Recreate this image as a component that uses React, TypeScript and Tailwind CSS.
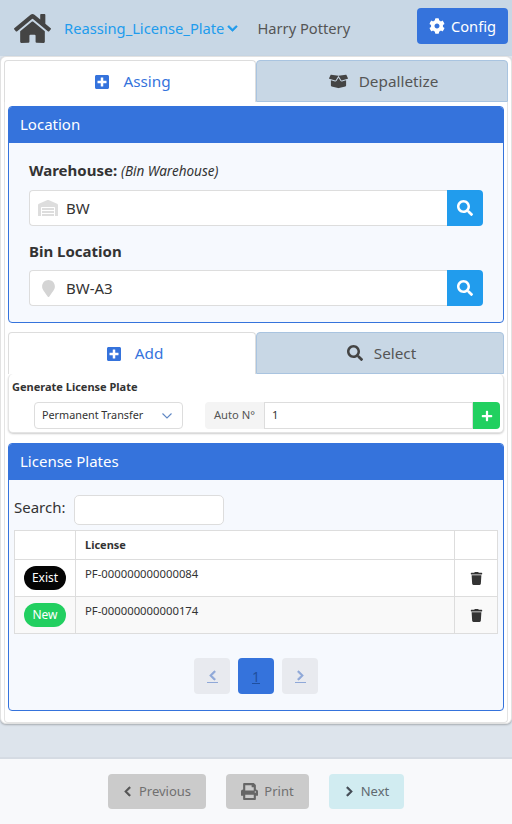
import React from "react";
import { FaHome, FaCog, FaPlusSquare, FaBoxOpen, FaSearch, FaWarehouse, FaMapMarker, FaTrash, FaChevronDown, FaChevronLeft, FaChevronRight, FaPrint, FaPlus } from "react-icons/fa";

function Tabs({ a, b, aIcon, bIcon }: { a: string; b: string; aIcon: React.ReactNode; bIcon: React.ReactNode }) {
  return (
    <div className="flex h-[42px] text-[15.3px]">
      <div className="w-1/2 flex items-center justify-center gap-[13px] pl-[5px] bg-white border border-b-0 border-[#dddddd] rounded-t-[4px] text-[#3573dc]">
        {aIcon}
        <span>{a}</span>
      </div>
      <div className="w-1/2 flex items-center justify-center gap-[11px] pl-[3px] bg-[#c8d7e5] border border-[#a9c4e0] rounded-t-[4px] text-[#555555]">
        {bIcon}
        <span>{b}</span>
      </div>
    </div>
  );
}

function CardHeader({ title }: { title: string }) {
  return <div className="h-[36px] bg-[#3573dc] text-white text-[15px] flex items-center px-[11px] pb-[2px] rounded-t-[3px]">{title}</div>;
}

function SearchInput({ icon, value }: { icon: React.ReactNode; value: string }) {
  return (
    <div className="flex h-[36px] mt-[8px]">
      <div className="flex-1 flex items-center bg-white border border-[#dddddd] border-r-0 rounded-l-[4px] text-[15px] text-[#333333]">
        <div className="w-[36px] flex justify-center">{icon}</div>
        <span>{value}</span>
      </div>
      <div className="w-[36px] bg-[#219ced] rounded-r-[4px] flex items-center justify-center text-white">
        <FaSearch size={16} />
      </div>
    </div>
  );
}

function Row({ badge, color, license, shade, h }: { badge: string; color: string; license: string; shade?: boolean; h: string }) {
  return (
    <div className={`flex border-t border-[#dddddd] ${h} ${shade ? "bg-[#f9f9f9]" : "bg-white"}`}>
      <div className="w-[61px] flex items-center justify-center border-r border-[#dddddd]">
        <span className={`w-[42px] h-[24px] rounded-full text-white text-[12px] flex items-center justify-center ${color}`}>{badge}</span>
      </div>
      <div className="flex-1 pl-[9px] pt-[6px] text-[11.3px] text-[#333333] border-r border-[#dddddd]">{license}</div>
      <div className="w-[42px] flex items-center justify-center text-[#333333]">
        <FaTrash size={13} />
      </div>
    </div>
  );
}

function PageArrow({ children }: { children: React.ReactNode }) {
  return (
    <div className="w-[36px] h-[36px] bg-[#e8eaef] rounded-[4px] flex items-center justify-center">
      <span className="border-b border-[#8fa8d8] text-[#8fa8d8] pb-[1px]">{children}</span>
    </div>
  );
}

export default function App() {
  return (
    <div className="w-[512px] h-[824px] flex flex-col bg-[#dde4ec] overflow-hidden font-['Noto_Sans','Open_Sans',sans-serif] text-[#333333]">
      <header className="h-[56px] bg-[#c8d7e5] flex items-center pl-[14px] pr-[4px] shrink-0">
        <FaHome size={37} className="text-[#444444]" />
        <span className="ml-[13px] text-[14.7px] text-[#219ced]">Reassing_License_Plate</span>
        <FaChevronDown size={11} stroke="currentColor" strokeWidth={30} className="ml-[3px] text-[#219ced]" />
        <span className="ml-[19px] text-[14.7px] text-[#555555]">Harry Pottery</span>
        <button className="ml-auto mb-[4px] w-[91px] h-[36px] bg-[#3573dc] rounded-[4px] text-white text-[14.7px] flex items-center justify-center gap-[6px]">
          <FaCog size={16} />
          Config
        </button>
      </header>

      <main className="h-[668px] shrink-0 bg-white rounded-[6px] border border-[#e2e2e2] shadow-[0_1px_2px_rgba(0,0,0,0.25)] px-[3px] pt-[3px]">
        <Tabs a="Assing" b="Depalletize" aIcon={<FaPlusSquare size={16} />} bIcon={<FaBoxOpen size={19} className="text-[#444444]" />} />
        <div className="border border-[#e4e4e4] border-t-0 rounded-b-[4px] px-[3px] pt-[4px] pb-[8px] h-[621px]">
          <section className="h-[217px] border border-[#3573dc] rounded-[4px] bg-[#f6f9fe]">
            <CardHeader title="Location" />
            <div className="px-[20px] pt-[16px]">
              <div className="text-[15px] leading-[22px] h-[23px]">
                <b>Warehouse:</b> <i className="text-[13.5px]">(Bin Warehouse)</i>
              </div>
              <SearchInput icon={<FaWarehouse size={20} className="text-[#dddddd]" />} value="BW" />
              <div className="text-[15px] font-bold leading-[22px] h-[22px] mt-[14px]">Bin Location</div>
              <SearchInput icon={<FaMapMarker size={17} className="text-[#d4d4d4]" />} value="BW-A3" />
            </div>
          </section>

          <div className="mt-[9px]">
            <Tabs a="Add" b="Select" aIcon={<FaPlusSquare size={16} />} bIcon={<FaSearch size={16} className="text-[#444444]" />} />
          </div>
          <div className="h-[59px] bg-white border border-[#e4e4e4] border-t-0 rounded-[5px] shadow-[0_1px_2px_rgba(0,0,0,0.2)] px-[3px] pt-[4px]">
            <div className="text-[11px] font-bold leading-[18px]">Generate License Plate</div>
            <div className="flex h-[27px] mt-[6px] text-[11.2px]">
              <div className="ml-[22px] w-[149px] bg-white border border-[#dddddd] rounded-[4px] flex items-center justify-between pl-[7px] pr-[10px] text-[10.8px]">
                <span>Permanent Transfer</span>
                <svg width="10" height="6" viewBox="0 0 10 6" fill="none" stroke="#5f87c4" strokeWidth="1.1"><path d="M0.5 0.5 L5 5 L9.5 0.5" /></svg>
              </div>
              <div className="ml-[22px] w-[59px] bg-[#f4f4f4] rounded-l-[4px] flex items-center justify-center text-[#555555]">Auto N°</div>
              <div className="w-[209px] bg-white border border-[#dddddd] flex items-center pl-[7px]">1</div>
              <div className="w-[27px] bg-[#22d060] rounded-r-[4px] flex items-center justify-center text-white">
                <FaPlus size={12} />
              </div>
            </div>
          </div>

          <section className="mt-[10px] h-[268px] border border-[#3573dc] rounded-[4px] bg-[#f6f9fe]">
            <CardHeader title="License Plates" />
            <div className="px-[5px] pt-[15px]">
              <div className="flex items-center h-[30px] text-[15px]">
                <span className="pb-[5px]">Search:</span>
                <div className="ml-[8px] w-[150px] h-[30px] bg-white border border-[#dddddd] rounded-[5px]" />
              </div>
              <div className="mt-[5px] h-[104px] border border-[#dddddd] flex flex-col">
                <div className="flex h-[28px] bg-white">
                  <div className="w-[61px] border-r border-[#dddddd]" />
                  <div className="flex-1 pl-[9px] pt-[1px] flex items-center text-[11px] font-bold border-r border-[#dddddd]">License</div>
                  <div className="w-[42px]" />
                </div>
                <Row badge="Exist" color="bg-[#050505]" license="PF-000000000000084" h="h-[37px]" />
                <Row badge="New" color="bg-[#22cf60]" license="PF-000000000000174" shade h="h-[37px]" />
              </div>
              <div className="flex justify-center gap-[8px] mt-[24px]">
                <PageArrow><FaChevronLeft size={11} stroke="currentColor" strokeWidth={30} /></PageArrow>
                <div className="w-[36px] h-[36px] bg-[#3573dc] rounded-[4px] flex items-center justify-center text-[14px] text-[#1f4f9f] underline">1</div>
                <PageArrow><FaChevronRight size={11} stroke="currentColor" strokeWidth={30} /></PageArrow>
              </div>
            </div>
          </section>
        </div>
      </main>

      <div className="flex-1" />

      <footer className="h-[67px] shrink-0 bg-[#f8f9fb] border-t-2 border-[#d5dbe3] flex justify-center gap-[20px] pt-[15px] text-[13px]">
        <button className="w-[98px] h-[35px] bg-[#cbcbcb] rounded-[4px] text-[#707070] flex items-center justify-center gap-[6px] pr-[1px]">
          <FaChevronLeft size={11} stroke="currentColor" strokeWidth={30} className="text-[#555555]" />
          Previous
        </button>
        <button className="w-[83px] h-[35px] bg-[#cbcbcb] rounded-[4px] text-[#707070] flex items-center justify-center gap-[6px]">
          <FaPrint size={17} className="text-[#666666]" />
          Print
        </button>
        <button className="w-[75px] h-[35px] bg-[#d1ecf1] rounded-[4px] text-[#606a70] flex items-center justify-center gap-[6px]">
          <FaChevronRight size={11} stroke="currentColor" strokeWidth={30} className="text-[#444c55]" />
          Next
        </button>
      </footer>
    </div>
  );
}
